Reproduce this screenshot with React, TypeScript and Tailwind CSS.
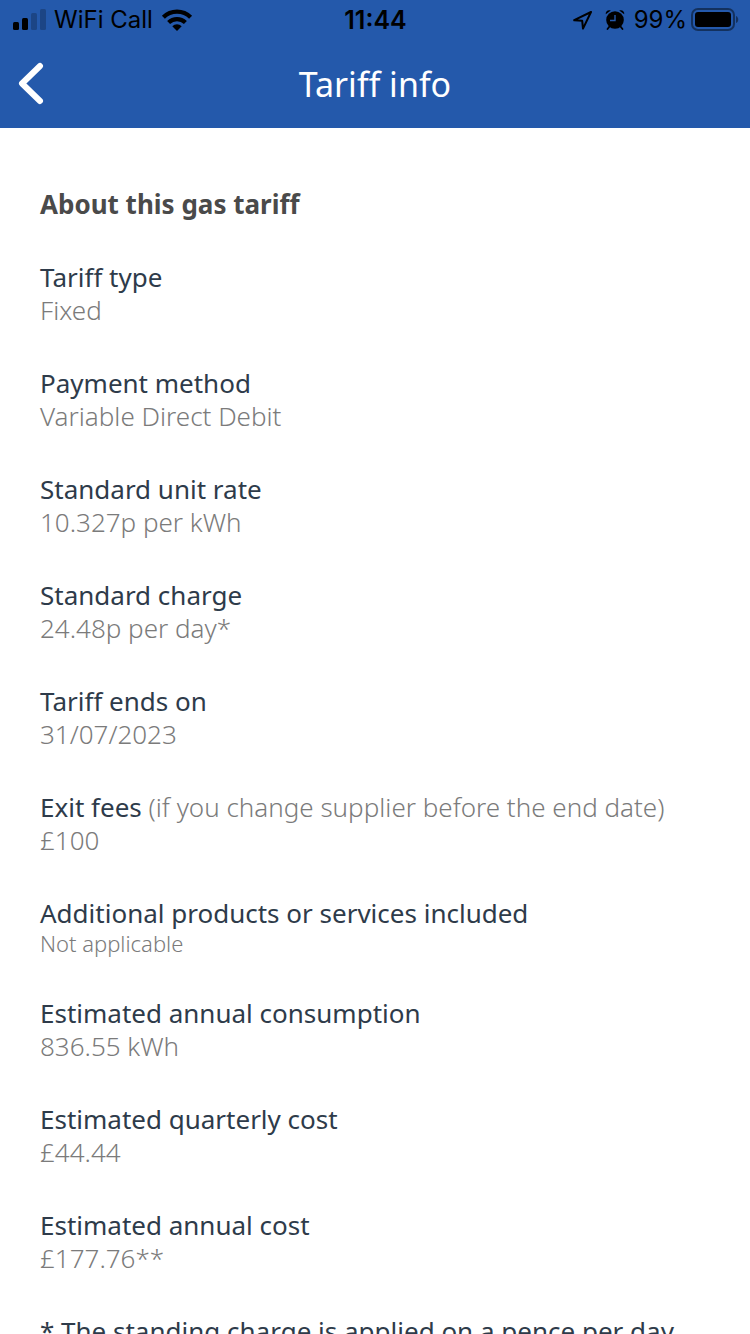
import type { ReactNode } from 'react';

interface TariffItemProps {
  label: string;
  note?: string;
  small?: boolean;
  children: ReactNode;
}

const items: { label: string; note?: string; value: string; small?: boolean }[] = [
  { label: 'Tariff type', value: 'Fixed' },
  { label: 'Payment method', value: 'Variable Direct Debit' },
  { label: 'Standard unit rate', value: '10.327p per kWh' },
  { label: 'Standard charge', value: '24.48p per day*' },
  { label: 'Tariff ends on', value: '31/07/2023' },
  { label: 'Exit fees', note: '(if you change supplier before the end date)', value: '£100' },
  { label: 'Additional products or services included', value: 'Not applicable', small: true },
  { label: 'Estimated annual consumption', value: '836.55 kWh' },
  { label: 'Estimated quarterly cost', value: '£44.44' },
  { label: 'Estimated annual cost', value: '£177.76**' },
];

function StatusBar() {
  return (
    <div className="grid h-10 grid-cols-[1fr_auto_1fr] items-center pr-[11px] pl-3 font-['Inter',sans-serif] text-2xl leading-10 text-black">
      <div className="flex items-center gap-2">
        <svg width="34" height="22" viewBox="0 0 34 22" aria-hidden="true">
          <rect x="1" y="13" width="6" height="8" rx="1.5" />
          <rect x="10" y="9" width="6" height="12" rx="1.5" />
          <rect x="19" y="4" width="6" height="17" rx="1.5" fillOpacity="0.22" />
          <rect x="28" y="0" width="6" height="21" rx="1.5" fillOpacity="0.22" />
        </svg>
        <span>WiFi Call</span>
        <svg width="32" height="24" viewBox="0 0 32 24" aria-hidden="true">
          <g fill="none" stroke="#000" strokeWidth="4.2">
            <path d="M2.4 9.2a19.2 19.2 0 0 1 27.2 0" />
            <path d="M7.6 14.6a12 12 0 0 1 16.8 0" />
          </g>
          <path d="M11.3 18.3a6.7 6.7 0 0 1 9.4 0L16 23z" />
        </svg>
      </div>
      <time className="text-[25px] font-semibold">11:44</time>
      <div className="flex items-center justify-end gap-2">
        <svg width="20" height="20" viewBox="0 0 20 20" fill="none" stroke="#000" strokeWidth="2" strokeLinejoin="round" aria-hidden="true">
          <path d="M19 2L2.2 10.2l8 .6.8 7.8z" />
        </svg>
        <svg width="22" height="22" viewBox="0 0 22 22" className="ml-1" aria-hidden="true">
          <circle cx="11" cy="11" r="8.8" />
          <path d="M5.5 17.5l-2 2.5M16.5 17.5l2 2.5" stroke="#000" strokeWidth="1.8" strokeLinecap="round" />
          <path d="M1.8 5.300C1.200 2.200 4 .4 6.800 1.500zM20.200 5.300C20.800 2.200 18 .4 15.200 1.500z" />
          <path d="M11 6v5.500H6" stroke="#2459ab" strokeWidth="1.4" fill="none" />
        </svg>
        <span>99%</span>
        <svg width="48" height="24" viewBox="0 0 48 24" className="-ml-1" aria-hidden="true">
          <rect x="1" y="1" width="42" height="21" rx="6" fill="none" stroke="#000" strokeOpacity="0.45" strokeWidth="2" />
          <rect x="4" y="4" width="36" height="15" rx="3" />
          <path d="M45 8c3 1 3 6 0 7z" fillOpacity="0.45" />
        </svg>
      </div>
    </div>
  );
}

function TariffItem({ label, note, small, children }: TariffItemProps) {
  return (
    <div>
      <dt className="leading-[33px] text-[#2e3b4a]">
        {label}
        {note && <span className="font-light text-[#7b7b7b]"> {note}</span>}
      </dt>
      <dd
        className={
          small
            ? 'text-[22px] leading-[27px] font-light text-[#7b7b7b]'
            : 'leading-[33px] font-light text-[#7b7b7b]'
        }
      >
        {children}
      </dd>
    </div>
  );
}

export default function App() {
  return (
    <div className="flex h-screen flex-col bg-white font-['Noto_Sans',sans-serif]">
      <header className="shrink-0 bg-[#2459ab]">
        <StatusBar />
        <nav className="grid h-[88px] grid-cols-[1fr_auto_1fr] items-center px-4">
          <button type="button" aria-label="Back" className="justify-self-start">
            <svg width="30" height="44" viewBox="0 0 30 44" fill="none" stroke="#fff" strokeWidth="6" strokeLinecap="round" strokeLinejoin="round">
              <path d="M24 4L6 21.5L24 39" />
            </svg>
          </button>
          <h1 className="text-[34px] leading-10 text-white">Tariff info</h1>
        </nav>
      </header>

      <main className="min-h-0 flex-1 overflow-y-auto px-10 pt-[60px] text-[26px] [scrollbar-width:none]">
        <h2 className="mb-10 leading-[33px] font-bold text-[#4a4a4a]">About this gas tariff</h2>
        <dl className="flex flex-col gap-10">
          {items.map((item) => (
            <TariffItem key={item.label} label={item.label} note={item.note} small={item.small}>
              {item.value}
            </TariffItem>
          ))}
        </dl>
        <p className="mt-10 leading-[33px] text-[#2e3b4a]">
          * The standing charge is applied on a pence per day
        </p>
      </main>
    </div>
  );
}
